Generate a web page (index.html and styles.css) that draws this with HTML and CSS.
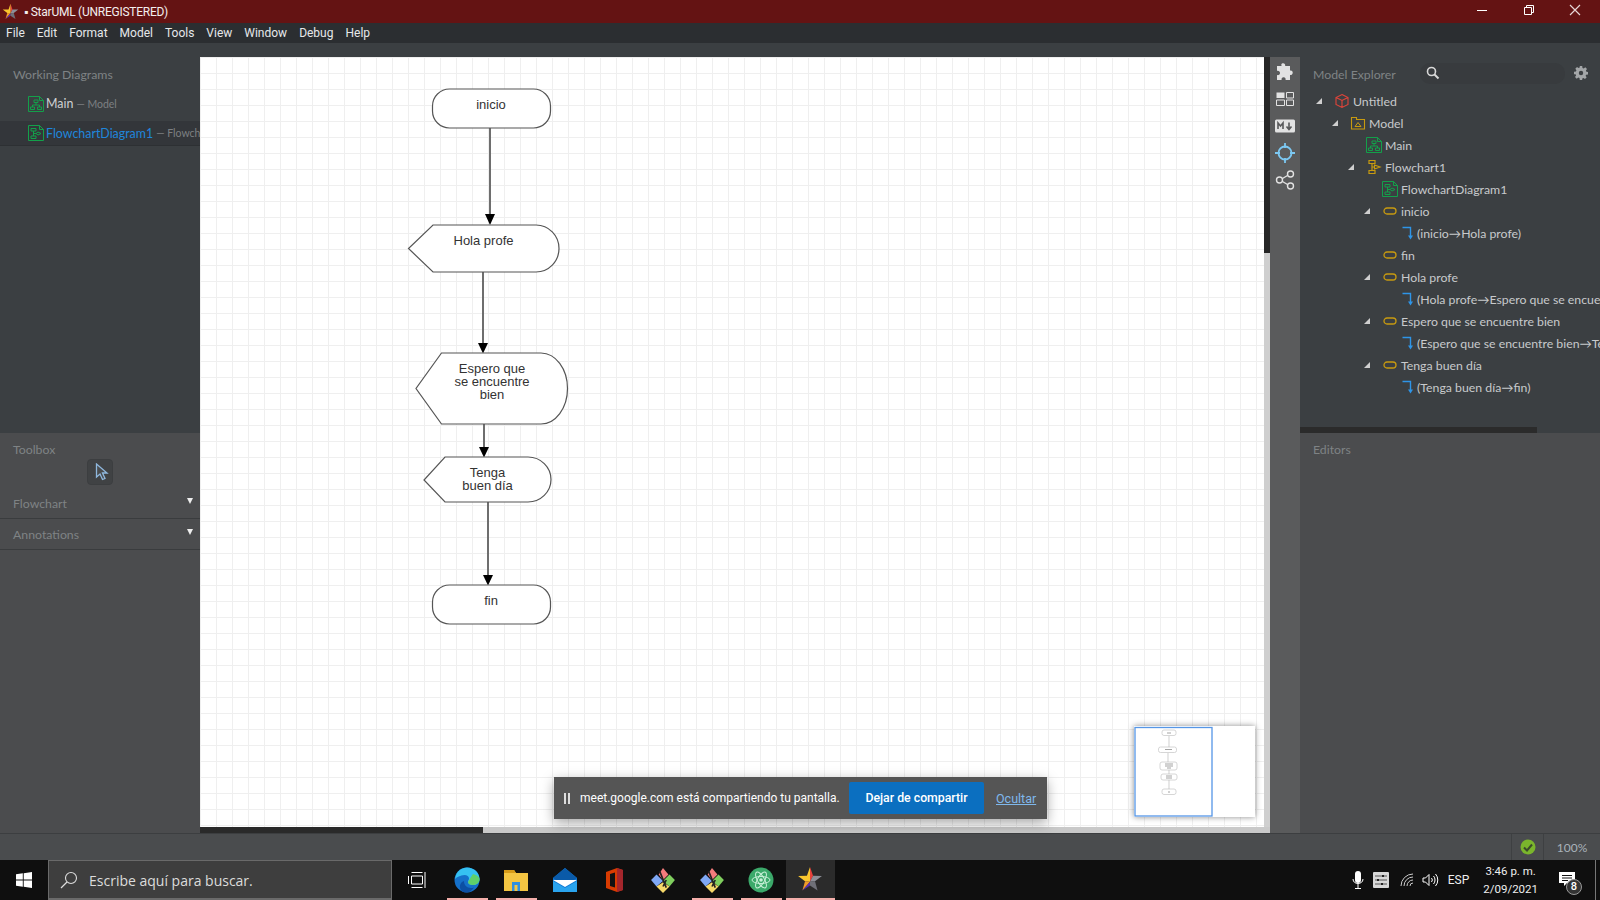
FILE: index.html
```html
<!DOCTYPE html>
<html lang="es">
<head>
<meta charset="utf-8">
<title>StarUML</title>
<link rel="stylesheet" href="styles.css">
</head>
<body>
<svg class="defs" width="0" height="0">
  <symbol id="star" viewBox="0 0 24 24">
    <polygon points="12,1 14.8,9 12,14.5" fill="#e8413c"/>
    <polygon points="12,1 9.2,9 1,9.2 7.4,14 12,14.5" fill="#f8c52e"/>
    <polygon points="14.8,9 23,9.2 16.6,14 12,14.5" fill="#8d8f98"/>
    <polygon points="7.4,14 5,22.5 12,14.5" fill="#f09a2a"/>
    <polygon points="12,14.5 5,22.5 12,18" fill="#5b2fb0"/>
    <polygon points="12,14.5 12,18 19,22.5 16.6,14" fill="#6f7078"/>
  </symbol>
  <symbol id="diag" viewBox="0 0 16 16">
    <path d="M.5.5h11l4 4v11H.5z" fill="none" stroke="#13a04a"/>
    <path d="M11.5.5v4h4" fill="none" stroke="#13a04a"/>
    <path d="M6 4h4v2.5H6zM2.5 11h4v2.5h-4zM9.5 11h4v2.5h-4zM8 6.5V9M4.5 11V9h7v2" fill="none" stroke="#13a04a"/>
  </symbol>
  <symbol id="flow" viewBox="0 0 16 16">
    <path d="M.5.5h11l4 4v11H.5z" fill="none" stroke="#13a04a"/>
    <path d="M11.5.5v4h4" fill="none" stroke="#13a04a"/>
    <path d="M3 3.5h5v2.5H3zM3 11h5v2.5H3zM5.5 6v5M8 8.5l2-1.5 3 1.500-3 1.500zM5.500 8.500H8" fill="none" stroke="#13a04a"/>
  </symbol>
  <symbol id="flowchart" viewBox="0 0 16 16">
    <path d="M3 1.500h6v3H3zM3 11.500h6v3H3zM6 4.500v7M6 8h2.500M8.500 6l5.500 2-5.500 2z" fill="none" stroke="#c79a10" stroke-width="1.200"/>
  </symbol>
  <symbol id="term" viewBox="0 0 14 8">
    <rect x="1" y="1" width="12" height="6" rx="3" fill="none" stroke="#c79a10" stroke-width="1.300"/>
  </symbol>
  <symbol id="conn" viewBox="0 0 12 14">
    <path d="M.5 1.500H8.500V10" fill="none" stroke="#2e95e8" stroke-width="1.400"/>
    <polygon points="6,9.500 11,9.500 8.500,13.500" fill="#2e95e8"/>
  </symbol>
  <symbol id="git" viewBox="0 0 24 24">
    <polygon points="12,1 17,7 12,12 8,7" fill="#f47c7c"/>
    <polygon points="6,7 12,13 6,18 1,12" fill="#7fa8f5"/>
    <polygon points="18,7 23,12 18,18 12,13" fill="#7fce5e"/>
    <polygon points="6,18 12,14 18,18 12,24" fill="#f6d86a"/>
    <path d="M9 4l6 15M15 12l-3 6" stroke="#222" stroke-width="1.500" fill="none"/>
  </symbol>
</svg>

<header class="titlebar">
  <svg class="title-star"><use href="#star"/></svg>
  <span class="title-text">▪ StarUML (UNREGISTERED)</span>
  <div class="winbtns">
    <svg class="winbtn" viewBox="0 0 46 23"><path d="M17 10.500h10" stroke="#fff"/></svg>
    <svg class="winbtn" viewBox="0 0 46 23"><path d="M18.500 7.500h7v7h-7zM20.500 7.500v-2h7v7h-2" fill="none" stroke="#fff"/></svg>
    <svg class="winbtn" viewBox="0 0 46 23"><path d="M18 5l10 10M28 5L18 15" stroke="#e6d6d6" stroke-width="1.200"/></svg>
  </div>
</header>

<nav class="menubar">
  <span class="menu-item">File</span><span class="menu-item">Edit</span><span class="menu-item">Format</span><span class="menu-item">Model</span><span class="menu-item">Tools</span><span class="menu-item">View</span><span class="menu-item">Window</span><span class="menu-item">Debug</span><span class="menu-item">Help</span>
</nav>

<main class="workspace">
  <aside class="sidebar">
    <section class="working">
      <div class="panel-label">Working Diagrams</div>
      <div class="wd-row">
        <svg class="wd-icon"><use href="#diag"/></svg>
        <span class="wd-name">Main</span><span class="wd-sub">— Model</span>
      </div>
      <div class="wd-row selected">
        <svg class="wd-icon"><use href="#flow"/></svg>
        <span class="wd-name blue">FlowchartDiagram1</span><span class="wd-sub">— Flowchart1</span>
      </div>
    </section>
    <section class="toolbox">
      <div class="panel-label toolbox-label">Toolbox</div>
      <div class="tool-btn">
        <svg class="cursor" width="14" height="18" viewBox="0 0 14 18"><path d="M1.500 1v13l3.500-3 2.500 5.500 2.500-1-2.500-5.500h4.500z" fill="#4a4c4e" stroke="#8fb8de" stroke-width="1.300"/></svg>
      </div>
      <div class="tool-group first"><span>Flowchart</span><i class="caret"></i></div>
      <div class="tool-group"><span>Annotations</span><i class="caret"></i></div>
    </section>
  </aside>

  <div class="center">
    <div class="canvas-wrap">
      <div class="canvas">
        <svg class="diagram" viewBox="200 57 1064 770" width="1064" height="770">
          <g class="edge">
            <path d="M490 128V216"/><path d="M483 272V345"/><path d="M484 424V449"/><path d="M488 502V577"/>
          </g>
          <g class="head">
            <polygon points="485,214 495,214 490,225"/>
            <polygon points="478,343 488,343 483,353.500"/>
            <polygon points="479,447 489,447 484,457.500"/>
            <polygon points="483,575 493,575 488,585.500"/>
          </g>
          <g class="node">
            <rect x="432.500" y="89" width="118" height="39" rx="17"/>
            <path d="M433 225H536a23 23.500 0 0 1 23 23.500a23 23.500 0 0 1-23 23.500H433L408.500 248.500z"/>
            <path d="M441.500 353H541a26.500 35.500 0 0 1 26.500 35.500a26.500 35.500 0 0 1-26.500 35.500H441.500L416 388.500z"/>
            <path d="M445 457H528a23 22.500 0 0 1 23 22.500a23 22.500 0 0 1-23 22.500H445L424 480z"/>
            <rect x="432.500" y="585" width="118" height="39" rx="17"/>
          </g>
          <g class="label">
            <text x="491" y="109">inicio</text>
            <text x="483.500" y="245">Hola profe</text>
            <text x="492" y="373">Espero que</text>
            <text x="492" y="386">se encuentre</text>
            <text x="492" y="399">bien</text>
            <text x="487.500" y="477">Tenga</text>
            <text x="487.500" y="490">buen día</text>
            <text x="491" y="605">fin</text>
          </g>
        </svg>

        <div class="minimap">
          <svg width="121" height="91" viewBox="1134 726 121 91">
            <g class="mini-node">
              <rect x="1162" y="730" width="14" height="5.500" rx="2"/>
              <rect x="1158.500" y="747" width="18" height="5.500" rx="2"/>
              <rect x="1160" y="762" width="17" height="8" rx="2"/>
              <rect x="1161" y="774" width="16" height="6" rx="2"/>
              <rect x="1162" y="789" width="14" height="5.500" rx="2"/>
            </g>
            <path class="mini-edge" d="M1169 736V747M1168 753V762M1169 770V774M1169 780V789"/>
            <path class="mini-text" d="M1167 733h4M1165 749.500h7M1165 764h8M1165 766h8M1167 768h4M1166 776h6M1166 778h6M1168 792h2"/>
            <rect class="mini-view" x="1135" y="727.500" width="77" height="88.500"/>
          </svg>
        </div>
      </div>
      <div class="vscroll"><div class="vthumb"></div></div>
    </div>
    <div class="hscroll"><div class="hthumb"></div></div>
  </div>

  <div class="railwrap">
    <div class="rail">
      <svg class="rail-icon" viewBox="0 0 20 20"><path d="M7 1.500c1.800-.8 3.500.3 3.200 2.500H15v4.500c2.200-.3 3.300 1.400 2.500 3.200-.7 1.400-2 1.300-2.500 1V18h-4.500c.4-1 .2-2.500-1.500-2.800-1.800-.2-2.800 1.200-2.400 2.800H2v-5c1.300.5 2.800-.2 3-1.800.2-1.700-1.500-2.700-3-2.200V4h4.700C6 3 6.200 2 7 1.500z" fill="#e2e2e2"/></svg>
      <svg class="rail-icon" viewBox="0 0 20 20"><path d="M1.500 3.500h8v5.500h-8z" fill="#e2e2e2"/><path d="M11.500 3.500h7v5.500h-7zM1.500 11h8v5.500h-8zM11.500 11h7v5.500h-7z" fill="none" stroke="#e2e2e2"/></svg>
      <svg class="rail-icon" viewBox="0 0 20 20"><rect y="3.500" width="20" height="13" rx="1.500" fill="#e2e2e2"/><path d="M3 13V7l2.500 3L8 7v6M14 6.500V13M11.500 10.500L14 13.500l2.500-3" fill="none" stroke="#58595a" stroke-width="1.600"/></svg>
      <svg class="rail-icon" viewBox="0 0 20 20"><circle cx="10" cy="10" r="6.500" fill="none" stroke="#7cc8f2" stroke-width="1.800"/><path d="M10 0v5M10 15v5M0 10h5M15 10h5" stroke="#7cc8f2" stroke-width="1.800"/></svg>
      <svg class="rail-icon" viewBox="0 0 20 20"><path d="M5 10l10-6M5 10l10 6" stroke="#e2e2e2" stroke-width="1.400"/><circle cx="4.500" cy="10" r="3" fill="#58595a" stroke="#e2e2e2" stroke-width="1.400"/><circle cx="15.500" cy="4" r="3" fill="#58595a" stroke="#e2e2e2" stroke-width="1.400"/><circle cx="15.500" cy="16" r="3" fill="#58595a" stroke="#e2e2e2" stroke-width="1.400"/></svg>
    </div>
  </div>

  <aside class="rightpanel">
    <section class="explorer">
      <div class="explorer-head">
        <span class="panel-label inline">Model Explorer</span>
        <div class="search">
          <svg width="14" height="14" viewBox="0 0 14 14"><circle cx="5.500" cy="5.500" r="4" fill="none" stroke="#d8d8d8" stroke-width="1.600"/><path d="M8.500 8.500l4 4" stroke="#d8d8d8" stroke-width="2"/></svg>
        </div>
        <svg class="gear" width="14" height="14" viewBox="0 0 14 14"><path d="M5.800 0h2.400l.3 1.900 1.200.5L11.300 1.300 13 3l-1.100 1.500.5 1.200 1.600.3v2.400l-1.900.3-.5 1.200L12.700 11.300 11 13l-1.500-1.100-1.200.5L8.200 14H5.800l-.3-1.900-1.200-.5L2.700 12.700 1 11l1.100-1.500-.5-1.200L0 8.200V5.800l1.900-.3.500-1.200L1.300 2.700 3 1l1.500 1.100 1.200-.5z" fill="#a3a6a8"/><circle cx="7" cy="7" r="2.200" fill="#3b3f42"/></svg>
      </div>
      <div class="tree">
        <div class="row d0"><i class="twist"></i><svg class="ico" viewBox="0 0 16 16"><path d="M8 1.500l6 3v7l-6 3-6-3v-7zM2 4.500l6 3 6-3M8 7.500v7" fill="none" stroke="#e0443a" stroke-width="1.100"/></svg><span>Untitled</span></div>
        <div class="row d1"><i class="twist"></i><svg class="ico" viewBox="0 0 16 16"><path d="M1.500 2.500h5v2h8v9.500h-13z" fill="none" stroke="#c79a10" stroke-width="1.100"/><path d="M5 11.500h6L8 7.500z" fill="none" stroke="#c79a10"/></svg><span>Model</span></div>
        <div class="row d2"><i class="spacer"></i><svg class="ico"><use href="#diag"/></svg><span>Main</span></div>
        <div class="row d2"><i class="twist"></i><svg class="ico"><use href="#flowchart"/></svg><span>Flowchart1</span></div>
        <div class="row d3"><i class="spacer"></i><svg class="ico"><use href="#flow"/></svg><span>FlowchartDiagram1</span></div>
        <div class="row d3"><i class="twist"></i><svg class="ico term"><use href="#term"/></svg><span>inicio</span></div>
        <div class="row d4"><i class="spacer"></i><svg class="ico conn"><use href="#conn"/></svg><span>(inicio→Hola profe)</span></div>
        <div class="row d3"><i class="spacer"></i><svg class="ico term"><use href="#term"/></svg><span>fin</span></div>
        <div class="row d3"><i class="twist"></i><svg class="ico term"><use href="#term"/></svg><span>Hola profe</span></div>
        <div class="row d4"><i class="spacer"></i><svg class="ico conn"><use href="#conn"/></svg><span>(Hola profe→Espero que se encuentre bien)</span></div>
        <div class="row d3"><i class="twist"></i><svg class="ico term"><use href="#term"/></svg><span>Espero que se encuentre bien</span></div>
        <div class="row d4"><i class="spacer"></i><svg class="ico conn"><use href="#conn"/></svg><span>(Espero que se encuentre bien→Tenga buen día)</span></div>
        <div class="row d3"><i class="twist"></i><svg class="ico term"><use href="#term"/></svg><span>Tenga buen día</span></div>
        <div class="row d4"><i class="spacer"></i><svg class="ico conn"><use href="#conn"/></svg><span>(Tenga buen día→fin)</span></div>
      </div>
      <div class="tree-scroll"><div class="tree-thumb"></div></div>
    </section>
    <section class="editors">
      <div class="panel-label toolbox-label">Editors</div>
    </section>
  </aside>

  <div class="toast">
    <span class="pause"></span>
    <span class="toast-text">meet.google.com está compartiendo tu pantalla.</span>
    <span class="toast-btn">Dejar de compartir</span>
    <span class="toast-link">Ocultar</span>
  </div>
</main>

<footer class="statusbar">
  <div class="status-cell check">
    <svg width="16" height="16" viewBox="0 0 16 16"><circle cx="8" cy="8" r="7.500" fill="#7ab52c"/><path d="M4 8.500l3 3 5-6" fill="none" stroke="#3a4a2a" stroke-width="2"/></svg>
  </div>
  <div class="status-cell zoom">100%</div>
</footer>

<div class="taskbar">
  <div class="start">
    <svg width="16" height="16" viewBox="0 0 16 16"><path d="M0 2.300l6.800-1v6.200H0zM7.700 1.200L16 0v7.500H7.700zM0 8.400h6.800v6.300L0 13.700zM7.700 8.400H16V16l-8.300-1.200z" fill="#fff"/></svg>
  </div>
  <div class="tb-search">
    <svg width="18" height="18" viewBox="0 0 18 18"><circle cx="11" cy="7" r="5.500" fill="none" stroke="#ddd" stroke-width="1.100"/><path d="M7 11l-6 6" stroke="#ddd" stroke-width="1.300"/></svg>
    <span>Escribe aquí para buscar.</span>
  </div>
  <div class="tb-apps">
    <div class="app taskview"><svg width="18" height="18" viewBox="0 0 18 18"><path d="M3.500 1.500h11M3.500 16.500h11M3.500 5h11v8h-11z M0.500 5v8M17 1v16" fill="none" stroke="#fff" stroke-width="1"/></svg></div>
    <div class="app run"><svg width="26" height="26" viewBox="0 0 26 26"><circle cx="13" cy="13" r="12.500" fill="#1570c9"/><path d="M1 12C2 4 8 .500 13 .500c7 0 12.500 5 12.500 11.500 0 4-3 6-6.500 6-3 0-5-1-5-3 0-1.500 1-2 1-3.500 0-2-2-3.500-4.500-3.500C6 8.500 3 10 1 12z" fill="#35c1f1"/><path d="M19 7c4 1 6.500 3 6.500 5.500 0 3-3 5.500-6.500 5.500-3 0-5-1-5-3l3-5z" fill="#5fd06a"/><path d="M10 14c0 4 2.500 7 7 7 1 0 2 0 3-.5-2 3-4.500 5-8 5C9 25.500 7 24 6 21c-.5-3 1-6 4-7z" fill="#0c4fa3"/></svg></div>
    <div class="app run"><svg width="26" height="24" viewBox="0 0 26 24"><path d="M1 2h10l2 3h12v18H1z" fill="#f4c542"/><path d="M1 2h10l2 3H1z" fill="#d79b18"/><path d="M9 23V14h8v9h-2.500v-6h-3v6z" fill="#2f8fe0"/></svg></div>
    <div class="app"><svg width="26" height="26" viewBox="0 0 26 26"><polygon points="13,1 25,11 25,25 1,25 1,11" fill="#0f78d4"/><polygon points="1,11 13,1 25,11 13,19" fill="#0a5aa8"/><polygon points="1,13 25,13 13,20" fill="#fff"/><polygon points="1,14 1,25 25,25 25,14 13,21" fill="#2aa4ee"/></svg></div>
    <div class="app"><svg width="22" height="26" viewBox="0 0 22 26"><path d="M14 1L3 5v16l11 4 6-2V3z" fill="#d83b01"/><path d="M14 1l6 2v20l-6 2z" fill="#a4262c"/><path d="M7 7l5-1.500v15L7 19z" fill="#111"/></svg></div>
    <div class="app"><svg width="26" height="26"><use href="#git"/></svg></div>
    <div class="app run"><svg width="26" height="26"><use href="#git"/></svg></div>
    <div class="app run"><svg width="26" height="26" viewBox="0 0 26 26"><circle cx="13" cy="13" r="12.500" fill="#3ba96a"/><ellipse cx="13" cy="13" rx="9" ry="3.500" fill="none" stroke="#c8f0d8"/><ellipse cx="13" cy="13" rx="9" ry="3.500" fill="none" stroke="#c8f0d8" transform="rotate(60 13 13)"/><ellipse cx="13" cy="13" rx="9" ry="3.500" fill="none" stroke="#c8f0d8" transform="rotate(120 13 13)"/><circle cx="13" cy="13" r="1.800" fill="#c8f0d8"/></svg></div>
    <div class="app active"><svg width="26" height="26"><use href="#star"/></svg></div>
  </div>
  <div class="tray">
    <svg class="tray-ico" width="12" height="20" viewBox="0 0 12 20"><rect x="3" y="1" width="6" height="12" rx="3" fill="#fff"/><path d="M1 9c0 6 10 6 10 0M6 14v4M3 18.500h6" fill="none" stroke="#fff"/></svg>
    <svg class="tray-ico settings" width="16" height="16" viewBox="0 0 16 16"><rect width="16" height="16" rx="1" fill="#d8d8d8"/><path d="M2 4h12M2 8h12M2 12h12" stroke="#555"/><path d="M10 3v2M5 7v2M9 11v2" stroke="#222" stroke-width="2"/></svg>
    <svg class="tray-ico wifi" width="14" height="14" viewBox="0 0 14 14"><path d="M1 13A12 12 0 0 1 13 1M4 13a9 9 0 0 1 9-9M7 13a6 6 0 0 1 6-6M10 13a3 3 0 0 1 3-3" fill="none" stroke="#ccc"/></svg>
    <svg class="tray-ico" width="17" height="14" viewBox="0 0 17 14"><path d="M1 5h2.500L7 1.500v11L3.500 9H1z" fill="none" stroke="#fff"/><path d="M9.500 5a3 3 0 0 1 0 4M11.500 3a6 6 0 0 1 0 8M13.500 1a9 9 0 0 1 0 12" fill="none" stroke="#fff"/></svg>
    <span class="lang">ESP</span>
    <div class="clock"><span>3:46 p. m.</span><span>2/09/2021</span></div>
    <div class="notif">
      <svg width="17" height="16" viewBox="0 0 17 16"><path d="M0 0h16v11H8l-3 3v-3H0z" fill="#fff"/><path d="M3 3.500h10M3 6h10M3 8.500h6" stroke="#111"/></svg>
      <span class="badge">8</span>
    </div>
  </div>
</div>
</body>
</html>
```

FILE: styles.css
```css
* { box-sizing: border-box; }
html, body { margin: 0; padding: 0; }
body {
  width: 1600px;
  height: 900px;
  overflow: hidden;
  display: flex;
  flex-direction: column;
  font-family: Lato, "Noto Sans", sans-serif;
  background: #3b3f42;
}
.defs { position: absolute; }

.titlebar {
  height: 23px;
  flex: none;
  display: flex;
  align-items: center;
  background: #641313;
  color: #fff;
}
.title-star { width: 17px; height: 17px; margin: 0 5px 0 2px; flex: none; }
.title-text { font: 12px Roboto, sans-serif; letter-spacing: -.25px; color: #f3eeee; }
.winbtns { margin-left: auto; margin-right: 2px; display: flex; }
.winbtn { width: 46px; height: 23px; display: block; }

.menubar {
  height: 20px;
  flex: none;
  display: flex;
  align-items: center;
  gap: 12px;
  padding: 0 0 0 6px;
  background: #2b2e31;
  color: #e6e8ea;
  font: 12px Roboto, sans-serif;
}

.workspace {
  position: relative;
  height: 790px;
  flex: none;
  display: flex;
}

.panel-label {
  font: 12.300px Lato, sans-serif;
  color: #7f8385;
}

.sidebar { width: 200px; flex: none; display: flex; flex-direction: column; }
.working { height: 390px; flex: none; padding-top: 24px; background: #3b3f42; overflow: hidden; }
.working .panel-label { padding-left: 13px; height: 24px; line-height: 16px; }
.wd-row {
  height: 25px;
  display: flex;
  align-items: center;
  padding-left: 28px;
  white-space: nowrap;
  overflow: hidden;
  margin-bottom: 5px;
}
.wd-row.selected { background: #33363a; border-bottom: 1px solid #2d3033; }
.wd-icon { width: 16px; height: 16px; flex: none; margin-right: 2px; }
.wd-name { font: 12.400px Lato, sans-serif; color: #cfd1d3; margin-right: 3px; }
.wd-name.blue { color: #1f86dc; }
.wd-sub { font: 10.500px Lato, sans-serif; color: #7d8082; }

.toolbox { flex: 1; background: #4b4c4e; padding-top: 8px; }
.toolbox-label { padding-left: 13px; height: 18px; line-height: 18px; }
.tool-btn {
  width: 26px;
  height: 26px;
  margin: 0 0 0 87px;
  display: flex;
  align-items: center;
  justify-content: center;
  background: #404244;
  border: 1px solid #3c3e40;
  border-radius: 4px;
}
.cursor { margin-left: 3px; }
.tool-group {
  height: 31px;
  display: flex;
  align-items: center;
  justify-content: space-between;
  padding: 0 7px 0 13px;
  border-bottom: 1px solid #3a3c3e;
  font: 12.300px Lato, sans-serif;
  color: #7f8385;
}
.tool-group.first { margin-top: 3px; }
.caret {
  width: 0;
  height: 0;
  margin-top: -5px;
  border-left: 3.500px solid transparent;
  border-right: 3.500px solid transparent;
  border-top: 6px solid #eee;
}

.center { width: 1070px; flex: none; padding-top: 14px; display: flex; flex-direction: column; background: #3b3f42; }
.canvas-wrap { height: 770px; flex: none; display: flex; }
.canvas {
  position: relative;
  width: 1064px;
  flex: none;
  background-color: #fff;
  background-image:
    linear-gradient(to right, #efefef 1px, transparent 1px),
    linear-gradient(to bottom, #efefef 1px, transparent 1px);
  background-size: 16px 16px;
  background-position: 0 0;
}
.diagram { display: block; }
.edge path { stroke: #6e6e6e; stroke-width: 2px; fill: none; }
.head polygon { fill: #000; }
.node rect, .node path { fill: #fff; stroke: #555; stroke-width: 1.200px; }
.label text {
  font: 13px "Liberation Sans", Arial, sans-serif;
  fill: #333;
  text-anchor: middle;
}
.minimap {
  position: absolute;
  left: 934px;
  top: 669px;
  width: 121px;
  height: 91px;
  background: #fff;
  box-shadow: 0 0 6px rgba(0, 0, 0, .45);
}
.minimap svg { display: block; }
.mini-node rect { fill: #fff; stroke: #ccc; stroke-width: .8px; }
.mini-edge { stroke: #bbb; stroke-width: .7px; fill: none; }
.mini-text { stroke: #666; stroke-width: .6px; fill: none; }
.mini-view { fill: none; stroke: #5596e6; stroke-width: 1.300px; }

.vscroll { width: 6px; flex: none; background: #cfcfcf; }
.vthumb { height: 196px; background: #262626; }
.hscroll { height: 6px; flex: none; width: 1070px; background: #c9c9c9; }
.hthumb { width: 283px; height: 6px; background: #2a2a2a; }

.railwrap { width: 30px; flex: none; padding-top: 14px; background: #3b3f42; }
.rail {
  height: 776px;
  background: #5a5b5c;
  display: flex;
  flex-direction: column;
  align-items: center;
  gap: 7px;
  padding-top: 5px;
}
.rail-icon { width: 20px; height: 20px; flex: none; }

.rightpanel { flex: 1; min-width: 0; display: flex; flex-direction: column; }
.explorer { height: 390px; flex: none; background: #3b3f42; position: relative; overflow: hidden; }
.explorer-head { display: flex; align-items: center; height: 20px; margin-top: 20px; padding-left: 13px; }
.panel-label.inline { width: 107px; flex: none; padding-top: 2px; }
.search {
  width: 145px;
  height: 21px;
  flex: none;
  display: flex;
  align-items: center;
  padding-left: 6px;
  border-radius: 10px;
  background: #383b3e;
}
.gear { margin-left: 9px; flex: none; }
.tree { padding-top: 7px; }
.row {
  height: 22px;
  display: flex;
  align-items: center;
  white-space: nowrap;
  font: 12.300px Lato, sans-serif;
  color: #c8cacc;
}
.d0 { padding-left: 12px; }
.d1 { padding-left: 28px; }
.d2 { padding-left: 44px; }
.d3 { padding-left: 60px; }
.d4 { padding-left: 76px; }
.twist, .spacer { width: 16px; height: 8px; flex: none; margin-right: 6px; display: block; position: relative; }
.twist::before {
  content: "";
  position: absolute;
  left: 4px;
  top: 1px;
  width: 0;
  height: 0;
  border-bottom: 6px solid #cfcfcf;
  border-left: 6px solid transparent;
}
.ico { width: 16px; height: 16px; flex: none; margin-right: 3px; }
.ico.term { height: 8px; width: 14px; margin-left: 1px; margin-right: 4px; }
.ico.conn { height: 14px; width: 12px; margin-left: 4px; margin-right: 3px; }
.tree-scroll { position: absolute; left: 0; right: 0; bottom: 0; height: 6px; }
.tree-thumb { width: 237px; height: 6px; background: #2b2b2b; }
.editors { flex: 1; background: #4b4c4e; padding-top: 8px; }

.toast {
  position: absolute;
  left: 554px;
  top: 734px;
  width: 493px;
  height: 42px;
  display: flex;
  align-items: center;
  background: #555;
  box-shadow: 0 4px 12px rgba(0, 0, 0, .35);
  font: 12.500px Roboto, sans-serif;
  color: #fff;
}
.pause {
  width: 6px;
  height: 11px;
  margin-left: 10px;
  flex: none;
  border-left: 2px solid #ddd;
  border-right: 2px solid #ddd;
}
.toast-text { margin-left: 10px; width: 259px; flex: none; white-space: nowrap; font-size: 12px; }
.toast-btn {
  width: 135px;
  height: 32px;
  margin-left: 10px;
  flex: none;
  display: flex;
  align-items: center;
  justify-content: center;
  background: #0b6fc0;
  border-radius: 2px;
  font-weight: 500;
  font-size: 12.300px;
}
.toast-link { margin-left: 12px; color: #7fb8ec; text-decoration: underline; }

.statusbar {
  height: 27px;
  flex: none;
  display: flex;
  justify-content: flex-end;
  background: #4a4c4e;
  border-top: 1px solid #3c3e40;
}
.status-cell { display: flex; align-items: center; justify-content: center; border-left: 1px solid #3e4042; }
.status-cell.check { width: 32px; }
.status-cell.zoom { width: 57px; font: 12px Lato, sans-serif; color: #a9b2ba; }

.taskbar {
  height: 40px;
  flex: none;
  display: flex;
  align-items: stretch;
  background: #0f0f0f;
  color: #fff;
}
.start { width: 48px; flex: none; display: flex; align-items: center; justify-content: center; }
.tb-search {
  width: 344px;
  flex: none;
  display: flex;
  align-items: center;
  padding-left: 11px;
  gap: 11px;
  background: #3e3e3e;
  border: 1px solid #6a6a6a;
  border-bottom-width: 2px;
  font: 14px "Open Sans", sans-serif;
  color: #dcdcdc;
}
.tb-search span { padding-top: 1px; }
.tb-apps { display: flex; }
.app {
  position: relative;
  width: 49px;
  flex: none;
  display: flex;
  align-items: center;
  justify-content: center;
}
.app.taskview { width: 50.500px; }
.app.run::after {
  content: "";
  position: absolute;
  left: 4px;
  right: 4px;
  bottom: 0;
  height: 2px;
  background: #f4aeaa;
}
.app.active { background: #2b2b2b; border-bottom: 2px solid #f4aeaa; }
.tray { margin-left: auto; margin-right: 4px; display: flex; align-items: center; }
.tray-ico { flex: none; margin-right: 9px; }
.tray-ico.settings { margin-right: 11px; }
.tray-ico.wifi { margin-right: 8px; }
.lang { font: 12px Roboto, sans-serif; margin-right: 14px; color: #eee; }
.clock {
  display: flex;
  flex-direction: column;
  align-items: center;
  gap: 2px;
  font: 11.500px/16px Roboto, sans-serif;
  color: #eee;
  margin-right: 13px;
}
.notif {
  position: relative;
  width: 45px;
  height: 40px;
  padding: 12px 0 0 8px;
  border-right: 1px solid #777;
}
.notif svg { display: block; }
.badge {
  position: absolute;
  left: 15px;
  top: 19px;
  width: 16px;
  height: 16px;
  border-radius: 50%;
  background: #333;
  border: 1px solid #999;
  font: 500 11px/14px Roboto, sans-serif;
  text-align: center;
}
```
